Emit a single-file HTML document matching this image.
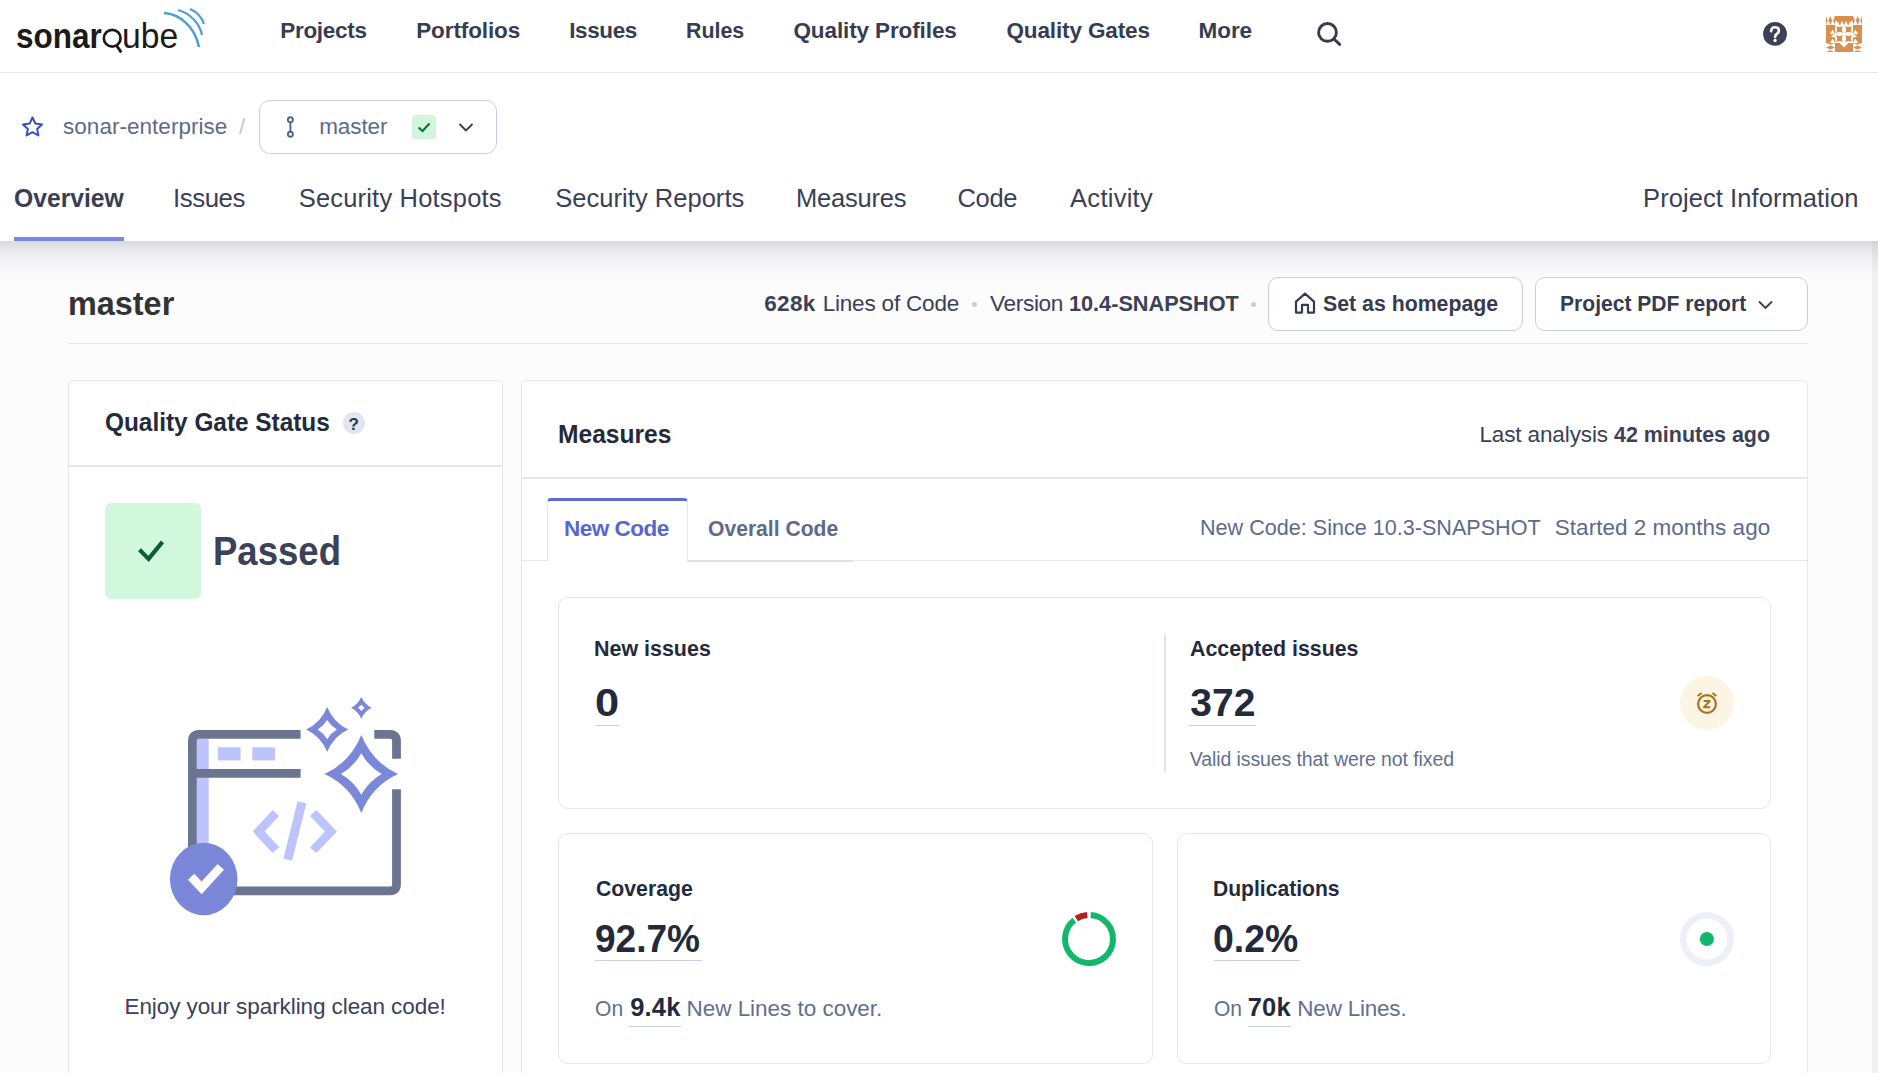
<!DOCTYPE html>
<html><head><meta charset="utf-8">
<style>
*{box-sizing:border-box;margin:0;padding:0}
html,body{width:1878px;height:1073px;overflow:hidden}
body{background:#fcfcfd;font-family:"Liberation Sans",sans-serif;position:relative;color:#2a2f40}
.a{position:absolute;white-space:nowrap;line-height:1}
.t{position:absolute;white-space:nowrap;line-height:1;transform-origin:0 0}
#topnav{position:absolute;left:0;top:0;width:1878px;height:73px;background:#fff;border-bottom:1px solid #e6e6e8}
.nav{top:20px;font-size:22.5px;font-weight:bold;color:#373c52}
#hdr{position:absolute;left:0;top:73px;width:1878px;height:168px;background:#fff}
#shadow{position:absolute;left:0;top:241px;width:1878px;height:42px;background:linear-gradient(to bottom,rgba(30,35,55,0.155),rgba(30,35,55,0.095) 20%,rgba(30,35,55,0.035) 50%,rgba(30,35,55,0.012) 75%,rgba(30,35,55,0) 100%)}
#sb{position:absolute;left:1872px;top:241px;width:6px;height:832px;background:#f1f1f2}
.tab{top:186px;font-size:25.5px;color:#3b4055}
.card{position:absolute;background:#fff;border:1px solid #e6e7ea;border-radius:5px}
.sub{font-size:22.5px;color:#5d6b8a}
.b{font-weight:bold}
.ul{position:absolute;height:1.5px;background:#c9d0e3}
.dot{position:absolute;width:5px;height:5px;border-radius:50%;background:#c5cde0}
.btn{position:absolute;height:54px;border:1.5px solid #c8cde6;border-radius:10px;background:#fff}
.h3{font-size:22.5px;font-weight:bold;color:#242a3c}
.big{font-size:39px;font-weight:bold;color:#242a3c}
.gr{color:#62708f}
</style>
<style id="fit">
#nav1{margin-left:-0.80px;letter-spacing:-0.286px;transform:scaleX(1.0000)}
#nav2{margin-left:-0.80px;letter-spacing:-0.111px;transform:scaleX(1.0000)}
#nav3{margin-left:-0.80px;letter-spacing:-0.400px;transform:scaleX(1.0000)}
#nav4{margin-left:-0.80px;letter-spacing:0.000px;transform:scaleX(0.9500)}
#nav5{margin-left:0.48px;letter-spacing:-0.114px;transform:scaleX(1.0000)}
#nav6{margin-left:0.40px;letter-spacing:-0.125px;transform:scaleX(1.0000)}
#nav7{margin-left:-0.40px;letter-spacing:-0.100px;transform:scaleX(1.0000)}
#crumb{margin-left:0.00px;letter-spacing:0.033px;transform:scaleX(1.0000)}
#branch{margin-left:-0.80px;letter-spacing:-0.100px;transform:scaleX(1.0000)}
#tab1{margin-left:-0.48px;letter-spacing:0.000px;transform:scaleX(0.9683)}
#tab2{margin-left:-1.60px;letter-spacing:-0.440px;transform:scaleX(1.0134)}
#tab3{margin-left:-0.32px;letter-spacing:0.190px;transform:scaleX(1.0000)}
#tab4{margin-left:-0.72px;letter-spacing:0.033px;transform:scaleX(1.0000)}
#tab5{margin-left:-1.12px;letter-spacing:-0.187px;transform:scaleX(1.0000)}
#tab6{margin-left:-0.56px;letter-spacing:-0.300px;transform:scaleX(1.0000)}
#tab7{margin-left:1.12px;letter-spacing:0.256px;transform:scaleX(1.0000)}
#tab8{margin-left:-0.96px;letter-spacing:0.072px;transform:scaleX(1.0000)}
#h1{margin-left:-1.04px;letter-spacing:0.000px;transform:scaleX(0.9669)}
#home{margin-left:0.56px;letter-spacing:0.000px;transform:scaleX(0.9465)}
#pdf{margin-left:-0.80px;letter-spacing:0.000px;transform:scaleX(0.9366)}
#qgs{margin-left:-0.96px;letter-spacing:0.000px;transform:scaleX(0.9557)}
#passed{margin-left:-1.36px;letter-spacing:0.000px;transform:scaleX(0.9134)}
#enjoy{margin-left:-1.52px;letter-spacing:-0.084px;transform:scaleX(1.0000)}
#meas{margin-left:-0.64px;letter-spacing:0.000px;transform:scaleX(0.9640)}
#nc{margin-left:-0.56px;letter-spacing:-0.485px;transform:scaleX(1.0002)}
#oc{margin-left:0.24px;letter-spacing:0.000px;transform:scaleX(0.9380)}
#ni{margin-left:-0.80px;letter-spacing:0.000px;transform:scaleX(0.9531)}
#zero{margin-left:-0.80px;letter-spacing:0.000px;transform:scaleX(1.1134)}
#ai{margin-left:-0.16px;letter-spacing:0.000px;transform:scaleX(0.9487)}
#n372{margin-left:-0.80px;letter-spacing:0.100px;transform:scaleX(1.0000)}
#valid{margin-left:-0.16px;letter-spacing:-0.103px;transform:scaleX(1.0000)}
#cov{margin-left:-0.24px;letter-spacing:0.000px;transform:scaleX(0.9434)}
#p927{margin-left:-0.80px;letter-spacing:0.000px;transform:scaleX(0.9496)}
#on1a{margin-left:-0.88px;letter-spacing:0.000px;transform:scaleX(0.9378)}
#on1b{margin-left:0.24px;letter-spacing:0.166px;transform:scaleX(1.0000)}
#on1c{margin-left:-1.52px;letter-spacing:-0.029px;transform:scaleX(1.0000)}
#dup{margin-left:-0.80px;letter-spacing:0.000px;transform:scaleX(0.9373)}
#p02{margin-left:-0.80px;letter-spacing:0.000px;transform:scaleX(0.9589)}
#on2a{margin-left:-0.40px;letter-spacing:0.000px;transform:scaleX(0.9333)}
#on2b{margin-left:-0.32px;letter-spacing:0.250px;transform:scaleX(1.0000)}
#on2c{margin-left:-1.68px;letter-spacing:-0.222px;transform:scaleX(1.0000)}
#logo1{margin-left:-0.72px;letter-spacing:0.000px;transform:scaleX(0.8863)}
#loc1{margin-left:0.16px;letter-spacing:0.367px;transform:scaleX(1.0000)}
#loc2{margin-left:-1.36px;letter-spacing:-0.183px;transform:scaleX(1.0000)}
#ver1{margin-left:0.96px;letter-spacing:-0.350px;transform:scaleX(1.0058)}
#ver2{margin-left:-0.40px;letter-spacing:0.000px;transform:scaleX(0.9631)}
#last1{margin-left:-0.64px;letter-spacing:-0.117px;transform:scaleX(1.0000)}
#last2{margin-left:0.08px;letter-spacing:0.000px;transform:scaleX(0.9528)}
#since1{margin-left:-0.64px;letter-spacing:0.000px;transform:scaleX(0.9591)}
#since2{margin-left:-0.16px;letter-spacing:0.010px;transform:scaleX(1.0000)}
#logo2{margin-left:-0.80px;letter-spacing:0.000px;transform:scaleX(0.9484)}
</style>
</head>
<body>
<div id="topnav">
  <div id="logo1" class="t b" style="left:17px;top:19px;font-size:35.5px;color:#1d1a1b">sonar</div>
  <div id="logo2" class="t" style="left:123px;top:19px;font-size:35.5px;color:#1d1a1b">ube</div>
  <svg class="a" style="left:100px;top:26px" width="26" height="30" viewBox="0 0 26 30">
    <circle cx="12.2" cy="12.2" r="8.35" fill="none" stroke="#1d1a1b" stroke-width="2.7"/>
    <path d="M16.6 19.6 L21.3 26.4" stroke="#1d1a1b" stroke-width="2.8"/>
  </svg>
  <svg class="a" style="left:160px;top:6px" width="50" height="44" viewBox="0 0 50 44">
    <path d="M4 7 C20 8 35 21 39 41" stroke="#4b9fd5" stroke-width="2.5" fill="none"/>
    <path d="M18 4 C30 7 40 18 42 29" stroke="#4b9fd5" stroke-width="2.2" fill="none"/>
    <path d="M30 3 C37 6 42 12 44 18" stroke="#4b9fd5" stroke-width="2.2" fill="none"/>
  </svg>
  <div id="nav1" class="t nav" style="left:281px">Projects</div>
  <div id="nav2" class="t nav" style="left:417px">Portfolios</div>
  <div id="nav3" class="t nav" style="left:570px">Issues</div>
  <div id="nav4" class="t nav" style="left:687px">Rules</div>
  <div id="nav5" class="t nav" style="left:793px">Quality Profiles</div>
  <div id="nav6" class="t nav" style="left:1006px">Quality Gates</div>
  <div id="nav7" class="t nav" style="left:1199px">More</div>
  <svg class="a" style="left:1314px;top:20px" width="30" height="30" viewBox="0 0 30 30">
    <circle cx="13.5" cy="12.4" r="8.9" stroke="#363b50" stroke-width="2.9" fill="none"/>
    <path d="M20 19 L25.6 24.4" stroke="#363b50" stroke-width="2.9" stroke-linecap="round"/>
  </svg>
  <svg class="a" style="left:1763px;top:22px" width="24" height="24" viewBox="0 0 24 24">
    <circle cx="12" cy="11.9" r="11.9" fill="#3b4157"/>
    <path d="M8.1 9.3 C8.3 6.5 10 5.3 12.1 5.3 C14.3 5.3 15.9 6.7 15.9 8.7 C15.9 10.5 14.7 11.3 13.6 12.1 C12.6 12.8 12.1 13.5 12.1 14.9" fill="none" stroke="#fff" stroke-width="2.6" stroke-linecap="round"/>
    <circle cx="12.1" cy="18.5" r="1.65" fill="#fff"/>
  </svg>
  <svg class="a" style="left:1826px;top:16px" width="36" height="36" viewBox="0 0 36 36">
    <rect width="36" height="36" fill="#d98f50"/>
    <polygon points="0,0 9,0 9,9 0,9" fill="#fff"/>
    <polygon points="4.3,0 6.2,4.5 4.3,9 2.4,4.5" fill="#d98f50"/>
    <polygon points="0,0 1.6,4.5 0,9" fill="#d98f50"/>
    <polygon points="9,0 7.2,4.5 9,9" fill="#d98f50"/>
    <polygon points="0,27 9,27 9,36 0,36" fill="#fff"/>
    <polygon points="0,31.5 4.5,29.4 9,31.5 4.5,33.6" fill="#d98f50"/>
    <polygon points="0,27 4.5,28.7 9,27" fill="#d98f50"/>
    <polygon points="0,36 4.5,34.3 9,36" fill="#d98f50"/>
    <polygon points="4,18 6.6,13.6 9,18" fill="#fff"/>
    <polygon points="9,18 4.8,20 9,22" fill="#fff"/>
    <polygon points="4,27 6.6,22.6 9,27" fill="#fff"/>
    <polygon points="9,4.6 12.5,6.5 13.2,9 9,9" fill="#fff"/>
    <polygon points="14.2,9 16,5 18,9" fill="#fff"/>
    <polygon points="36,0 27,0 27,9 36,9" fill="#fff"/>
    <polygon points="31.7,0 29.8,4.5 31.7,9 33.6,4.5" fill="#d98f50"/>
    <polygon points="36,0 34.4,4.5 36,9" fill="#d98f50"/>
    <polygon points="27,0 28.8,4.5 27,9" fill="#d98f50"/>
    <polygon points="36,27 27,27 27,36 36,36" fill="#fff"/>
    <polygon points="36,31.5 31.5,29.4 27,31.5 31.5,33.6" fill="#d98f50"/>
    <polygon points="36,27 31.5,28.7 27,27" fill="#d98f50"/>
    <polygon points="36,36 31.5,34.3 27,36" fill="#d98f50"/>
    <polygon points="32,18 29.4,13.6 27,18" fill="#fff"/>
    <polygon points="27,18 31.2,20 27,22" fill="#fff"/>
    <polygon points="32,27 29.4,22.6 27,27" fill="#fff"/>
    <polygon points="27,4.6 23.5,6.5 22.8,9 27,9" fill="#fff"/>
    <polygon points="21.8,9 20,5 18,9" fill="#fff"/>
    <polygon points="9,9 27,9 27,27 9,27" fill="#fff"/>
    <path fill="#d98f50" d="M10 10 Q13.5 12.2 17 10 Q14.8 13.5 17 17 Q13.5 14.8 10 17 Q12.2 13.5 10 10Z"/>
    <path fill="#d98f50" d="M10 19 Q13.5 21.2 17 19 Q14.8 22.5 17 26 Q13.5 23.8 10 26 Q12.2 22.5 10 19Z"/>
    <path fill="#d98f50" d="M19 10 Q22.5 12.2 26 10 Q23.8 13.5 26 17 Q22.5 14.8 19 17 Q21.2 13.5 19 10Z"/>
    <path fill="#d98f50" d="M19 19 Q22.5 21.2 26 19 Q23.8 22.5 26 26 Q22.5 23.8 19 26 Q21.2 22.5 19 19Z"/>
    <polygon points="13.5,27 22.5,27 18,31.5" fill="#fff"/>
  </svg>
</div>
<div id="hdr"></div>

<svg class="a" style="left:20px;top:115px" width="25" height="24" viewBox="0 0 24 24">
  <path d="M12 2.5 L14.9 8.6 L21.5 9.4 L16.6 13.9 L17.9 20.5 L12 17.2 L6.1 20.5 L7.4 13.9 L2.5 9.4 L9.1 8.6 Z" fill="none" stroke="#3f4bbd" stroke-width="2" stroke-linejoin="round"/>
</svg>
<div id="crumb" class="t sub" style="left:63px;top:116px">sonar-enterprise</div>
<div class="a" style="left:239px;top:116px;font-size:22.5px;color:#c3c6ce">/</div>
<div class="btn" style="left:259px;top:100px;width:238px;border-radius:11px"></div>
<svg class="a" style="left:283px;top:115px" width="14" height="24" viewBox="0 0 14 24">
  <circle cx="7.4" cy="4.7" r="2.5" fill="none" stroke="#56648a" stroke-width="1.9"/>
  <circle cx="7.4" cy="19.2" r="2.5" fill="none" stroke="#56648a" stroke-width="1.9"/>
  <path d="M7.4 7.2 V16.7" stroke="#56648a" stroke-width="1.9"/>
</svg>
<div id="branch" class="t sub" style="left:320px;top:116px">master</div>
<div class="a" style="left:412px;top:115px;width:24px;height:24px;background:#d2f5dc;border-radius:3px"></div>
<svg class="a" style="left:412px;top:115px" width="24" height="24" viewBox="0 0 24 24">
  <path d="M6.5 12.5 L10.5 16 L17.5 8.5" fill="none" stroke="#0b6e3d" stroke-width="2"/>
</svg>
<svg class="a" style="left:457px;top:120px" width="18" height="14" viewBox="0 0 18 14">
  <path d="M2.5 4 L9 10.5 L15.5 4" fill="none" stroke="#363b50" stroke-width="1.8"/>
</svg>

<div id="tab1" class="t tab b" style="left:14px;color:#393e53">Overview</div>
<div id="tab2" class="t tab" style="left:175px">Issues</div>
<div id="tab3" class="t tab" style="left:299px">Security Hotspots</div>
<div id="tab4" class="t tab" style="left:556px">Security Reports</div>
<div id="tab5" class="t tab" style="left:797px">Measures</div>
<div id="tab6" class="t tab" style="left:958px">Code</div>
<div id="tab7" class="t tab" style="left:1069px">Activity</div>
<div id="tab8" class="t tab" style="left:1644px">Project Information</div>
<div class="a" style="left:14px;top:237px;width:110px;height:4px;background:#7b87d9"></div>

<div id="sb"></div>
<div id="shadow"></div>

<div id="h1" class="t b" style="left:69px;top:287px;font-size:33.5px;color:#333">master</div>
<div id="loc1" class="t b" style="left:764px;top:293px;font-size:22.5px;color:#3b4157">628k</div>
<div id="loc2" class="t" style="left:824px;top:293px;font-size:22.5px;color:#3b4157">Lines of Code</div>
<div class="dot" style="left:972px;top:302px"></div>
<div id="ver1" class="t" style="left:989px;top:293px;font-size:22.5px;color:#3b4157">Version</div>
<div id="ver2" class="t b" style="left:1069px;top:293px;font-size:22.5px;color:#3b4157">10.4-SNAPSHOT</div>
<div class="dot" style="left:1251px;top:302px"></div>
<div class="btn" style="left:1268px;top:277px;width:255px"></div>
<svg class="a" style="left:1293px;top:291px" width="24" height="25" viewBox="0 0 24 25">
  <path d="M3 10.6 L12 2.6 L21 10.6 V21.6 H15 V13.8 H9 V21.6 H3 Z" fill="none" stroke="#363b50" stroke-width="2.2" stroke-linejoin="round"/>
</svg>
<div id="home" class="t b" style="left:1322px;top:293px;font-size:22.5px;color:#363b50">Set as homepage</div>
<div class="btn" style="left:1535px;top:277px;width:273px"></div>
<div id="pdf" class="t b" style="left:1561px;top:293px;font-size:22.5px;color:#363b50">Project PDF report</div>
<svg class="a" style="left:1757px;top:298px" width="17" height="13" viewBox="0 0 17 13">
  <path d="M2 3.5 L8.5 10 L15 3.5" fill="none" stroke="#363b50" stroke-width="1.8"/>
</svg>
<div class="a" style="left:68px;top:343px;width:1740px;height:1px;background:#e8e8ea"></div>

<div class="card" style="left:68px;top:380px;width:435px;height:720px"></div>
<div id="qgs" class="t b" style="left:106px;top:410px;font-size:25.5px;color:#242a3c">Quality Gate Status</div>
<div class="a" style="left:343px;top:412px;width:21.5px;height:21.5px;border-radius:50%;background:#e1e6f2"></div>
<div class="a b" style="left:348.6px;top:416px;font-size:17px;color:#2f3447">?</div>
<div class="a" style="left:69px;top:465px;width:433px;height:1.5px;background:#e6e7ea"></div>
<div class="a" style="left:105px;top:503px;width:96px;height:96px;background:#d1f8dc;border-radius:6px"></div>
<svg class="a" style="left:132px;top:532px" width="40" height="36" viewBox="0 0 40 36">
  <path d="M7.5 17.8 L16.6 26.9 L30.5 9.9" fill="none" stroke="#0b5e36" stroke-width="4.1"/>
</svg>
<div id="passed" class="t b" style="left:214px;top:531px;font-size:40px;color:#3b4157">Passed</div>
<!-- illustration -->
<svg class="a" style="left:160px;top:690px" width="250" height="240" viewBox="160 690 250 240">
  <rect x="196.7" y="738.8" width="12" height="110" fill="#bdc3fd"/>
  <rect x="217.8" y="747.3" width="22.8" height="13.1" fill="#bdc3fd"/>
  <rect x="252.3" y="747.3" width="22.8" height="13.1" fill="#bdc3fd"/>
  <path d="M300.6 734.4 H199 Q192.4 734.4 192.4 741 V890.8 H390 Q396.5 890.8 396.5 884.3 V789.3 M396.5 758.8 V741 Q396.5 734.4 390 734.4 H374.3" fill="none" stroke="#6b7590" stroke-width="8.8"/>
  <path d="M192.4 773.4 H300.6" stroke="#6b7590" stroke-width="8.8"/>
  <polygon points="252.7,831.5 272.7,810 279.1,815.9 264.6,831.5 279.4,847.2 272.4,853.1" fill="#bdc4fd"/>
  <polygon points="337,831.5 316.4,810 310,815.9 324.9,831.5 310,847.5 316.4,853.1" fill="#bdc4fd"/>
  <polygon points="297.5,801.2 306.3,803.2 292.1,860.8 283.5,858.6" fill="#bdc4fd"/>
  <path fill-rule="evenodd" fill="#7b87d9" d="M361.3 735.1 Q372.3 762.3 398.1 774.0 Q372.3 785.7 361.3 812.9 Q350.3 785.7 324.5 774.0 Q350.3 762.3 361.3 735.1ZM361.3 753.2 Q368.6 766.5 381.7 774.0 Q368.6 781.5 361.3 794.8 Q354.0 781.5 340.9 774.0 Q354.0 766.5 361.3 753.2Z"/>
  <path fill-rule="evenodd" fill="#7b87d9" d="M327.2 706.9 Q333.5 722.6 348.3 729.4 Q333.5 736.1 327.2 751.9 Q320.9 736.1 306.1 729.4 Q320.9 722.6 327.2 706.9ZM327.2 720.0 Q330.8 726.0 336.8 729.6 Q330.8 733.2 327.2 739.2 Q323.6 733.2 317.6 729.6 Q323.6 726.0 327.2 720.0Z"/>
  <path fill-rule="evenodd" fill="#7b87d9" d="M361.3 696.9 Q364.6 704.3 371.6 707.8 Q364.6 711.3 361.3 718.7 Q358.0 711.3 351.0 707.8 Q358.0 704.3 361.3 696.9ZM361.3 704.7 Q362.8 706.4 364.7 707.8 Q362.8 709.2 361.3 710.9 Q359.8 709.2 357.9 707.8 Q359.8 706.4 361.3 704.7Z"/>
  <ellipse cx="203.7" cy="879" rx="33.8" ry="36.2" fill="#7b87d9"/>
  <path d="M191.1 876.7 L201.6 887.9 L220.8 866.9" fill="none" stroke="#fff" stroke-width="8.6"/>
</svg>
<div id="enjoy" class="t" style="left:126px;top:996px;font-size:22.5px;color:#3b4157">Enjoy your sparkling clean code!</div>

<div class="card" style="left:521px;top:380px;width:1287px;height:720px"></div>
<div id="meas" class="t b" style="left:559px;top:422px;font-size:25.5px;color:#242a3c">Measures</div>
<div id="last1" class="t" style="left:1480px;top:424px;font-size:22.5px;color:#3b4157">Last analysis</div>
<div id="last2" class="t b" style="left:1614px;top:424px;font-size:22.5px;color:#3b4157">42 minutes ago</div>
<div class="a" style="left:522px;top:477px;width:1285px;height:1.5px;background:#e6e7ea"></div>
<div class="a" style="left:522px;top:559.5px;width:1285px;height:1.5px;background:#e6e7ea"></div>
<div class="a" style="left:547px;top:497.5px;width:141px;height:64px;background:#fff;border:1.5px solid #e6e7ea;border-bottom:none;border-top:3px solid #5d6cd0;border-radius:4px 4px 0 0"></div>
<div class="a" style="left:688px;top:560px;width:165px;height:1.5px;background:#dfe1e6"></div>
<div id="nc" class="t b" style="left:565px;top:518px;font-size:22.5px;color:#5867cf">New Code</div>
<div id="oc" class="t b" style="left:708px;top:518px;font-size:22.5px;color:#5d6b8a">Overall Code</div>
<div id="since1" class="t" style="left:1201px;top:517px;font-size:22.5px;color:#5d6b8a">New Code: Since 10.3-SNAPSHOT</div>
<div id="since2" class="t" style="left:1555px;top:517px;font-size:22.5px;color:#5d6b8a">Started 2 months ago</div>

<div class="card" style="left:558px;top:597px;width:1213px;height:212px;border-radius:10px"></div>
<div id="ni" class="t h3" style="left:595px;top:638px">New issues</div>
<div id="zero" class="t big" style="left:596px;top:683px">0</div>
<div class="ul" style="left:595px;top:724.5px;width:24px"></div>
<div class="a" style="left:1164px;top:634px;width:1.5px;height:138px;background:#e1e5f0"></div>
<div id="ai" class="t h3" style="left:1190px;top:638px">Accepted issues</div>
<div id="n372" class="t big" style="left:1191px;top:683px">372</div>
<div class="ul" style="left:1189px;top:724.5px;width:67px"></div>
<div id="valid" class="t gr" style="left:1190px;top:750px;font-size:19.5px">Valid issues that were not fixed</div>
<div class="a" style="left:1680px;top:676px;width:54px;height:54px;border-radius:50%;background:#fcf5e3"></div>
<svg class="a" style="left:1695px;top:690px" width="24" height="24" viewBox="0 0 24 24">
  <circle cx="12" cy="14" r="8.9" fill="none" stroke="#ab7319" stroke-width="2.2"/>
  <path d="M2.6 6 L6.6 3 M21.4 6 L17.4 3" stroke="#ab7319" stroke-width="2"/>
  <path d="M9.4 11 H14.8 L9 17.2 H14.5" fill="none" stroke="#ab7319" stroke-width="1.9" stroke-linejoin="round" stroke-linecap="round"/>
</svg>

<div class="card" style="left:558px;top:833px;width:595px;height:231px;border-radius:10px"></div>
<div id="cov" class="t h3" style="left:596px;top:878px">Coverage</div>
<div id="p927" class="t big" style="left:596px;top:919px">92.7%</div>
<div class="ul" style="left:595px;top:959.5px;width:107px"></div>
<div id="on1a" class="t gr" style="left:596px;top:998px;font-size:22.5px">On</div>
<div id="on1b" class="t b" style="left:630px;top:995px;font-size:25.5px;color:#242a3c">9.4k</div>
<div id="on1c" class="t gr" style="left:688px;top:998px;font-size:22.5px">New Lines to cover.</div>
<div class="ul" style="left:629px;top:1025.5px;width:52px"></div>
<svg class="a" style="left:1059px;top:909px" width="60" height="60" viewBox="0 0 60 60">
  <circle cx="30" cy="30" r="24" fill="none" stroke="#12b76a" stroke-width="6" stroke-dasharray="132.4 200" transform="rotate(-86 30 30)"/>
  <circle cx="30" cy="30" r="24" fill="none" stroke="#b41f1f" stroke-width="6" stroke-dasharray="11.7 200" transform="rotate(238 30 30)"/>
</svg>

<div class="card" style="left:1177px;top:833px;width:594px;height:231px;border-radius:10px"></div>
<div id="dup" class="t h3" style="left:1214px;top:878px">Duplications</div>
<div id="p02" class="t big" style="left:1214px;top:919px">0.2%</div>
<div class="ul" style="left:1214px;top:959.5px;width:86px"></div>
<div id="on2a" class="t gr" style="left:1214px;top:998px;font-size:22.5px">On</div>
<div id="on2b" class="t b" style="left:1248px;top:995px;font-size:25.5px;color:#242a3c">70k</div>
<div id="on2c" class="t gr" style="left:1299px;top:998px;font-size:22.5px">New Lines.</div>
<div class="ul" style="left:1248px;top:1025.5px;width:43px"></div>
<svg class="a" style="left:1677px;top:909px" width="60" height="60" viewBox="0 0 60 60">
  <circle cx="30" cy="30" r="23.7" fill="none" stroke="#edf0f7" stroke-width="6.7"/>
  <circle cx="29.9" cy="30" r="7.1" fill="#12b76a"/>
</svg>
</body></html>
